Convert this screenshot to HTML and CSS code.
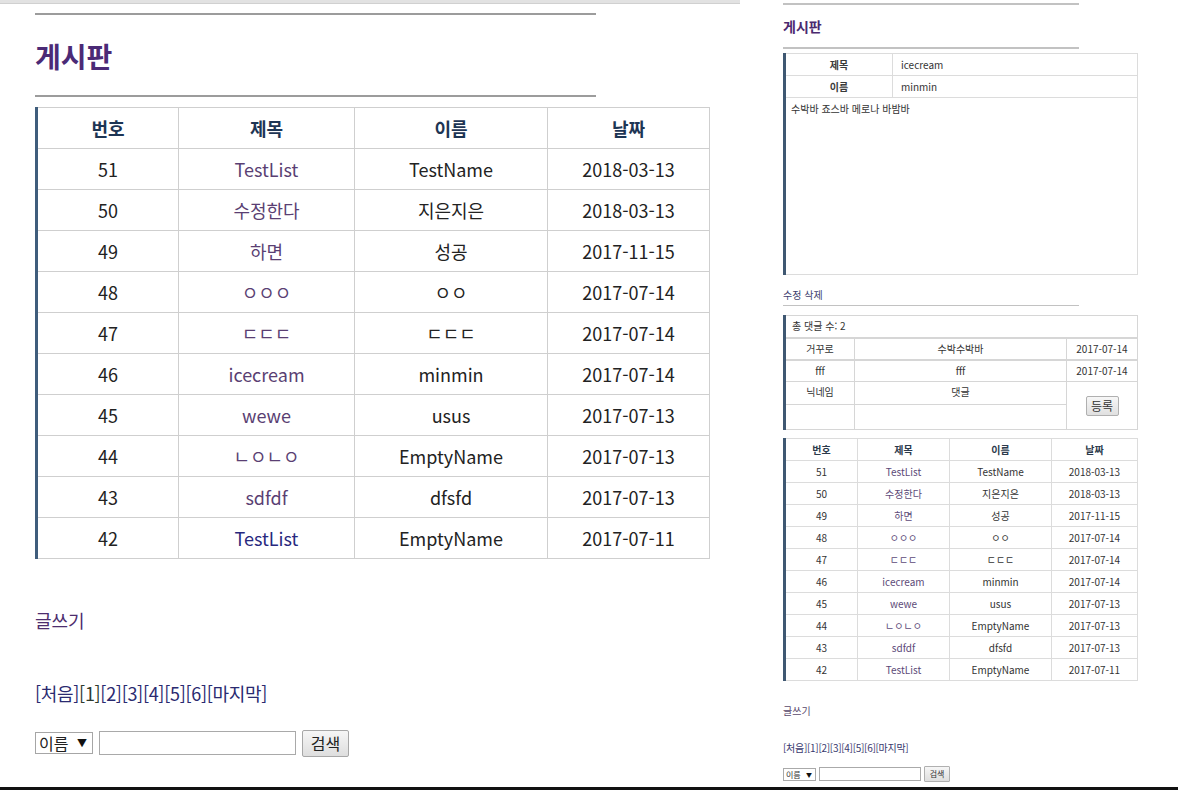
FILE: index.html
```html
<!DOCTYPE html>
<html lang="ko">
<head>
<meta charset="utf-8">
<title>게시판</title>
<link rel="stylesheet" href="styles.css">
</head>
<body>
<div class="screen">
  <section class="panel-l">
    <div class="strip"></div>
    <div class="page-l">
      <hr class="rule-l">
      <h1 class="title-l">게시판</h1>
      <hr class="rule-l rule-l2">
      <table class="list-l">
        <colgroup><col class="c1"><col class="c2"><col class="c3"><col class="c4"></colgroup>
        <tr><th>번호</th><th>제목</th><th>이름</th><th>날짜</th></tr>
        <tr><td>51</td><td><a class="v">TestList</a></td><td>TestName</td><td>2018-03-13</td></tr>
        <tr><td>50</td><td><a class="v">수정한다</a></td><td>지은지은</td><td>2018-03-13</td></tr>
        <tr><td>49</td><td><a class="v">하면</a></td><td>성공</td><td>2017-11-15</td></tr>
        <tr><td>48</td><td><a class="v jamo">ㅇㅇㅇ</a></td><td class="jamo">ㅇㅇ</td><td>2017-07-14</td></tr>
        <tr><td>47</td><td><a class="v jamo">ㄷㄷㄷ</a></td><td class="jamo">ㄷㄷㄷ</td><td>2017-07-14</td></tr>
        <tr><td>46</td><td><a class="v">icecream</a></td><td>minmin</td><td>2017-07-14</td></tr>
        <tr><td>45</td><td><a class="v">wewe</a></td><td>usus</td><td>2017-07-13</td></tr>
        <tr><td>44</td><td><a class="v jamo">ㄴㅇㄴㅇ</a></td><td>EmptyName</td><td>2017-07-13</td></tr>
        <tr><td>43</td><td><a class="v">sdfdf</a></td><td>dfsfd</td><td>2017-07-13</td></tr>
        <tr><td>42</td><td><a class="n">TestList</a></td><td>EmptyName</td><td>2017-07-11</td></tr>
      </table>
      <div class="write-l"><a>글쓰기</a></div>
      <div class="pager-l"><a>[처음]</a><a class="cur">[1]</a><a>[2]</a><a>[3]</a><a>[4]</a><a>[5]</a><a>[6]</a><a>[마지막]</a></div>
      <form class="search-l">
        <span class="sel"><select><option>이름</option></select></span>
        <input type="text" class="kw">
        <button type="button" class="btn">검색</button>
      </form>
    </div>
  </section>

  <section class="panel-r">
    <hr class="rule-r">
    <h1 class="title-r">게시판</h1>
    <hr class="rule-r rule-r2">
    <table class="detail">
      <colgroup><col class="d1"><col class="d2"></colgroup>
      <tr><th>제목</th><td>icecream</td></tr>
      <tr><th>이름</th><td>minmin</td></tr>
      <tr><td colspan="2" class="body">수박바 죠스바 메로나 바밤바</td></tr>
    </table>
    <div class="edit-r"><a>수정</a> <a>삭제</a></div>
    <hr class="rule-r rule-r3">
    <table class="cmt">
      <colgroup><col class="m1"><col class="m2"><col class="m3"></colgroup>
      <tr><td colspan="3" class="count">총 댓글 수: 2</td></tr>
      <tr class="crow"><td>거꾸로</td><td>수박수박바</td><td>2017-07-14</td></tr>
      <tr class="crow"><td>fff</td><td>fff</td><td>2017-07-14</td></tr>
      <tr class="hrow"><td>닉네임</td><td>댓글</td><td rowspan="2"><button type="button" class="btn-s">등록</button></td></tr>
      <tr class="irow"><td></td><td></td></tr>
    </table>
    <table class="list-r">
      <colgroup><col class="r1"><col class="r2"><col class="r3"><col class="r4"></colgroup>
      <tr><th>번호</th><th>제목</th><th>이름</th><th>날짜</th></tr>
      <tr><td>51</td><td><a class="v">TestList</a></td><td>TestName</td><td>2018-03-13</td></tr>
      <tr><td>50</td><td><a class="v">수정한다</a></td><td>지은지은</td><td>2018-03-13</td></tr>
      <tr><td>49</td><td><a class="v">하면</a></td><td>성공</td><td>2017-11-15</td></tr>
      <tr><td>48</td><td><a class="v jamo">ㅇㅇㅇ</a></td><td class="jamo">ㅇㅇ</td><td>2017-07-14</td></tr>
      <tr><td>47</td><td><a class="v jamo">ㄷㄷㄷ</a></td><td class="jamo">ㄷㄷㄷ</td><td>2017-07-14</td></tr>
      <tr><td>46</td><td><a class="v">icecream</a></td><td>minmin</td><td>2017-07-14</td></tr>
      <tr><td>45</td><td><a class="v">wewe</a></td><td>usus</td><td>2017-07-13</td></tr>
      <tr><td>44</td><td><a class="v jamo">ㄴㅇㄴㅇ</a></td><td>EmptyName</td><td>2017-07-13</td></tr>
      <tr><td>43</td><td><a class="v">sdfdf</a></td><td>dfsfd</td><td>2017-07-13</td></tr>
      <tr><td>42</td><td><a class="v">TestList</a></td><td>EmptyName</td><td>2017-07-11</td></tr>
    </table>
    <div class="write-r"><a>글쓰기</a></div>
    <div class="pager-r"><a>[처음]</a><a>[1]</a><a>[2]</a><a>[3]</a><a>[4]</a><a>[5]</a><a>[6]</a><a>[마지막]</a></div>
    <form class="search-r">
      <span class="sel-s"><select><option>이름</option></select></span>
      <input type="text" class="kw-s">
      <button type="button" class="btn-xs">검색</button>
    </form>
  </section>
</div>
<div class="bottombar"></div>
</body>
</html>
```

FILE: styles.css
```css
* { box-sizing: border-box; }
body {
  margin: 0;
  font-family: "Noto Sans CJK KR", "Noto Sans", sans-serif;
  background: #fff;
  color: #222;
}
a { cursor: pointer; }
.screen {
  display: flex;
  height: 787px;
  overflow: hidden;
}
.bottombar {
  height: 3px;
  background: #111;
}

/* ---------- left panel ---------- */
.panel-l {
  width: 740px;
  flex: none;
}
.strip {
  height: 4px;
  background: #e2e2e2;
  border-bottom: 1px solid #d0d0d0;
}
.page-l {
  padding-left: 35px;
}
.rule-l {
  width: 561px;
  height: 0;
  margin: 9px 0 0;
  border: 0;
  border-top: 2px solid #9c9c9c;
}
.title-l {
  margin: 24px 0 0;
  font-size: 28px;
  line-height: 34px;
  font-weight: bold;
  color: #4b2a76;
}
.rule-l2 { margin-top: 22px; }

.list-l {
  margin-top: 10px;
  width: 675px;
  table-layout: fixed;
  border-collapse: collapse;
  font-size: 18px;
  border-left: 3px solid #3f5d7c;
}
.list-l .c1 { width: 142px; }
.list-l .c2 { width: 176px; }
.list-l .c3 { width: 193px; }
.list-l .c4 { width: 162px; }
.list-l th,
.list-l td {
  height: 41px;
  padding: 0;
  text-align: center;
  vertical-align: middle;
  border: 1px solid #cfcfcf;
  line-height: 24px;
  font-weight: normal;
}
.list-l th {
  font-weight: bold;
  color: #1d3554;
}
.list-l td { color: #222; }
.v { color: #5a3f73; }
.n { color: #28287e; }
.jamo { letter-spacing: 0; }
.list-l td.jamo { color: #222; }

.write-l {
  margin-top: 49px;
  font-size: 18px;
  line-height: 24px;
}
.write-l a { color: #4d2d6e; }
.pager-l {
  margin-top: 49px;
  font-size: 18px;
  line-height: 24px;
  letter-spacing: -0.3px;
}
.pager-l a { color: #2a2a70; }
.pager-l a.cur { color: #2e3a2e; }

.search-l {
  margin: 24px 0 0;
  display: flex;
  align-items: center;
  gap: 6px;
  height: 28px;
}
.sel, .sel-s {
  position: relative;
  display: flex;
}
.sel select {
  appearance: none;
  -webkit-appearance: none;
  width: 58px;
  height: 22px;
  margin: 0;
  padding: 0 0 0 3px;
  border: 1px solid #a6a6a6;
  border-radius: 0;
  background: #fff;
  font-family: inherit;
  font-size: 16px;
  line-height: 20px;
  color: #222;
}
.sel::after {
  content: "▼";
  position: absolute;
  right: 6px;
  top: 4px;
  font-size: 10px;
  line-height: 14px;
  color: #111;
  pointer-events: none;
}
.kw {
  width: 197px;
  height: 24px;
  margin: 0;
  border: 1px solid #a9a9a9;
  padding: 0 4px;
}
.btn {
  width: 47px;
  height: 27px;
  margin: 0;
  padding: 0;
  border: 1px solid #a7a7a7;
  border-radius: 2px;
  background: linear-gradient(#f6f6f6, #dedede);
  font-family: inherit;
  font-size: 16px;
  line-height: 24px;
  color: #222;
}

/* ---------- right panel ---------- */
.panel-r {
  width: 438px;
  flex: none;
  padding: 3px 0 0 43px;
}
.rule-r {
  width: 296px;
  height: 0;
  margin: 0;
  border: 0;
  border-top: 2px solid #c2c2c2;
}
.title-r {
  margin: 12px 0 0;
  font-size: 14px;
  line-height: 18px;
  font-weight: bold;
  color: #4b2a6f;
}
.rule-r2 { margin-top: 12px; }

.detail, .cmt, .list-r {
  width: 355px;
  table-layout: fixed;
  border-collapse: collapse;
  font-size: 10px;
  border-left: 3px solid #3f5872;
}
.detail { margin-top: 4px; }
.detail .d1 { width: 108px; }
.detail th,
.detail td {
  height: 22px;
  padding: 0 0 0 8px;
  border: 1px solid #dcdcdc;
  line-height: 14px;
  color: #333;
  text-align: left;
}
.detail th {
  padding: 0;
  text-align: center;
  font-weight: bold;
  color: #3a3a3a;
}
.detail td.body {
  height: 177px;
  vertical-align: top;
  padding: 4px 5px;
}

.edit-r {
  margin-top: 13px;
  font-size: 10px;
  line-height: 14px;
}
.edit-r a { color: #3e3e6e; }
.rule-r3 { margin-top: 3px; border-top-width: 1px; }

.cmt { margin-top: 9px; }
.cmt .m1 { width: 70px; }
.cmt .m2 { width: 212px; }
.cmt td {
  height: 22px;
  padding: 0;
  border: 1px solid #d6d6d6;
  text-align: center;
  line-height: 14px;
  color: #333;
}
.cmt td.count {
  text-align: left;
  padding-left: 6px;
}
.cmt .crow td { border-top: 2px solid #d6d6d6; }
.cmt .hrow td { height: 23px; vertical-align: top; padding-top: 3px; }
.cmt .hrow td[rowspan] { vertical-align: middle; padding-top: 0; }
.cmt .irow td { height: 25px; }
.btn-s {
  width: 33px;
  height: 20px;
  margin: 0;
  padding: 0;
  border: 1px solid #b0b0b0;
  border-radius: 2px;
  background: linear-gradient(#f7f7f7, #e0e0e0);
  font-family: inherit;
  font-size: 12px;
  line-height: 18px;
  color: #333;
}

.list-r { margin-top: 8px; }
.list-r .r1 { width: 73px; }
.list-r .r2 { width: 92px; }
.list-r .r3 { width: 102px; }
.list-r th,
.list-r td {
  height: 22px;
  padding: 0;
  border: 1px solid #dcdcdc;
  text-align: center;
  line-height: 14px;
  color: #333;
  font-weight: normal;
}
.list-r th { font-weight: bold; color: #2c3a4c; }
.list-r .v { color: #5d4a78; }

.write-r {
  margin-top: 23px;
  font-size: 10px;
  line-height: 14px;
}
.write-r a { color: #5a4a6c; }
.pager-r {
  margin-top: 23px;
  font-size: 10px;
  line-height: 14px;
  letter-spacing: -0.3px;
}
.pager-r a { color: #3a3a6e; }
.search-r {
  margin: 11px 0 0;
  display: flex;
  align-items: center;
  gap: 3px;
  height: 16px;
}
.sel-s select {
  appearance: none;
  -webkit-appearance: none;
  width: 33px;
  height: 13px;
  margin: 0;
  padding: 0 0 0 2px;
  border: 1px solid #aaa;
  border-radius: 0;
  background: #fff;
  font-family: inherit;
  font-size: 8px;
  line-height: 11px;
  color: #333;
}
.sel-s::after {
  content: "▼";
  position: absolute;
  right: 4px;
  top: 2px;
  font-size: 6px;
  line-height: 9px;
  color: #111;
  pointer-events: none;
}
.kw-s {
  width: 102px;
  height: 14px;
  margin: 0;
  padding: 0;
  border: 1px solid #aaa;
}
.btn-xs {
  width: 26px;
  height: 16px;
  margin: 0;
  padding: 0;
  border: 1px solid #b0b0b0;
  border-radius: 1px;
  background: linear-gradient(#f6f6f6, #dedede);
  font-family: inherit;
  font-size: 8px;
  line-height: 14px;
  color: #333;
}
```
